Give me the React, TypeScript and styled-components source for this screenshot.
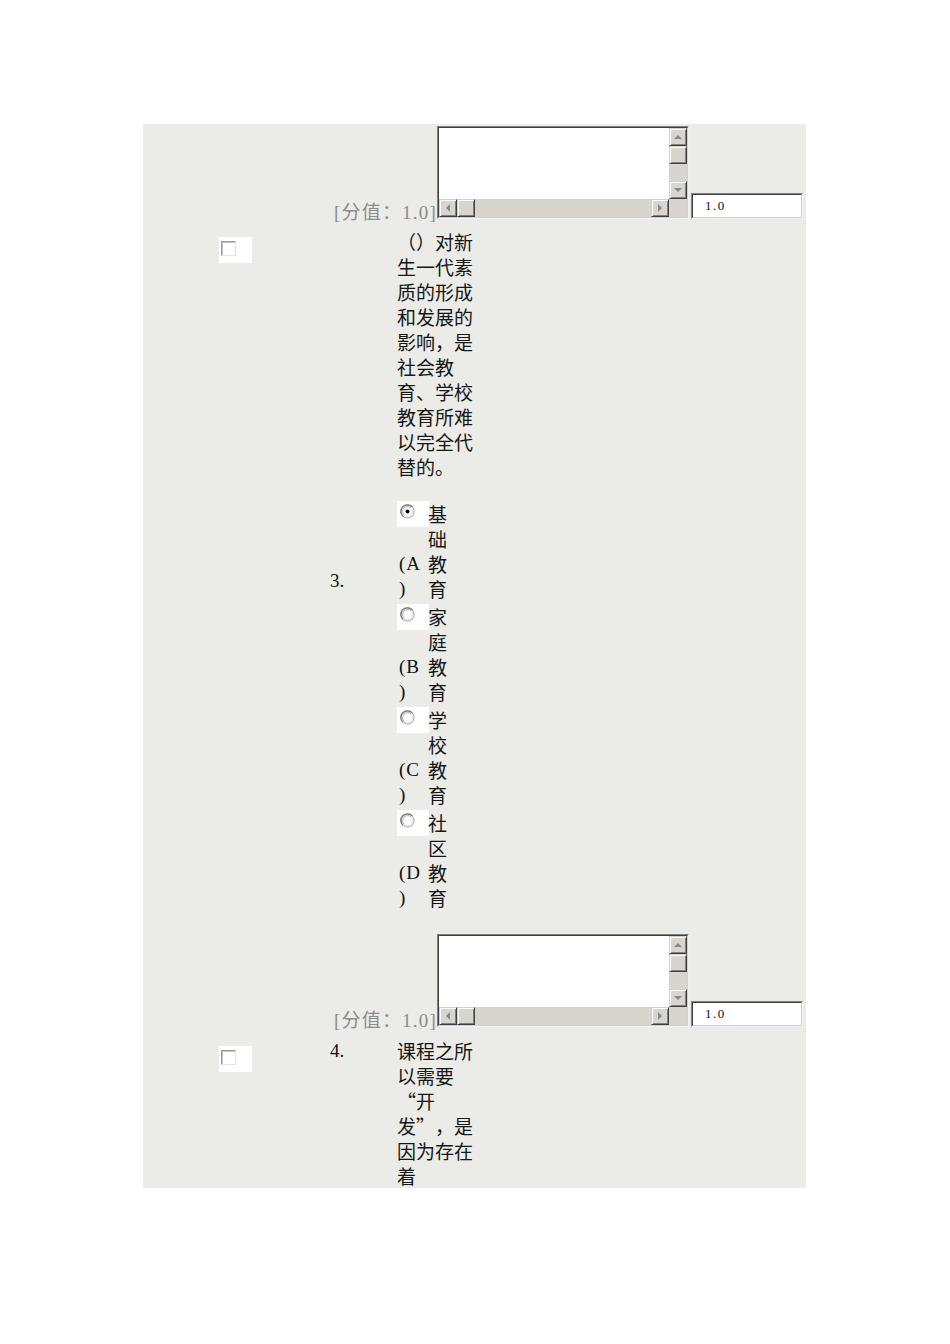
import React from "react";
import styled, { createGlobalStyle } from "styled-components";

type Option = { key: string; text: string; checked?: boolean };
type Question = { num: string; text: string; options?: Option[]; middle?: boolean };

const GlobalStyle = createGlobalStyle`
  html, body {
    margin: 0;
    padding: 0;
    background: #ffffff;
  }
  body {
    font-family: "Liberation Serif", "Noto Sans CJK SC", serif;
    color: #111;
  }
`;

const Page = styled.div`
  padding: 124px 0 0 143px;
`;

const Panel = styled.div`
  width: 663px;
  height: 1064px;
  overflow: hidden;
  background: #ebece8;
`;

// ---- score row: label + memo + value box
const ScoreRowWrap = styled.div`
  display: grid;
  grid-template-columns: 294px 252px 114px;
  align-items: end;
  padding-top: 2px;
`;

const ScoreLabel = styled.div`
  text-align: right;
  font-size: 19px;
  line-height: 19px;
  letter-spacing: 1.2px;
  color: #8b8b8b;
  margin-bottom: -3px;
  white-space: nowrap;
`;

const Sunken = styled.div<{ $w: number; $h: number; $ml?: number }>`
  box-sizing: border-box;
  width: ${(p) => p.$w}px;
  height: ${(p) => p.$h}px;
  margin-left: ${(p) => p.$ml ?? 0}px;
  border: 1px solid;
  border-color: #808080 #f4f4f4 #f4f4f4 #808080;
`;

const SunkenInner = styled.div`
  box-sizing: border-box;
  height: 100%;
  border: 1px solid;
  border-color: #404040 #d4d0c8 #d4d0c8 #404040;
  background: #ffffff;
`;

const MemoGrid = styled(SunkenInner)`
  display: grid;
  grid-template-columns: 1fr 18px;
  grid-template-rows: 1fr 18px;
`;

const VBar = styled.div`
  display: flex;
  flex-direction: column;
  background: #d8d5cf;
`;

const HBar = styled.div`
  display: flex;
  background: #d8d5cf;
`;

const Track = styled.div`
  flex: 1;
`;

const Corner = styled.div`
  background: #d8d5cf;
`;

const ScrollBtn = styled.div`
  box-sizing: border-box;
  width: 18px;
  height: 18px;
  flex: none;
  display: flex;
  align-items: center;
  justify-content: center;
  background: #d8d5cf;
  border: 1px solid;
  border-color: #d4d0c8 #404040 #404040 #d4d0c8;
  box-shadow: inset 1px 1px 0 #ffffff, inset -1px -1px 0 #808080;
`;

const Arrow = styled.span<{ $dir: "up" | "down" | "left" | "right" }>`
  width: 0;
  height: 0;
  ${(p) =>
    p.$dir === "up"
      ? "border-left: 4px solid transparent; border-right: 4px solid transparent; border-bottom: 4px solid #8a8a8a;"
      : p.$dir === "down"
      ? "border-left: 4px solid transparent; border-right: 4px solid transparent; border-top: 4px solid #8a8a8a;"
      : p.$dir === "left"
      ? "border-top: 4px solid transparent; border-bottom: 4px solid transparent; border-right: 4px solid #8a8a8a;"
      : "border-top: 4px solid transparent; border-bottom: 4px solid transparent; border-left: 4px solid #8a8a8a;"}
`;

const ValueBox = styled(SunkenInner)`
  display: flex;
  align-items: center;
  padding-left: 12px;
  font-family: "Liberation Serif", serif;
  font-size: 13px;
  letter-spacing: 1.5px;
  color: #111;
`;

// ---- question rows
const QuestionRowWrap = styled.div<{ $top: number }>`
  display: grid;
  grid-template-columns: 111px 67px 77px;
  padding-left: 76px;
  margin-top: ${(p) => p.$top}px;
`;

const CheckCell = styled.div`
  align-self: start;
  margin-top: 8px;
  box-sizing: border-box;
  width: 33px;
  height: 26px;
  padding: 4px 0 0 2px;
  background: #ffffff;
`;

const CheckBox = styled.span`
  display: block;
  box-sizing: border-box;
  width: 15px;
  height: 15px;
  border: 1px solid;
  border-color: #9a9a9a #e4e4e4 #e4e4e4 #9a9a9a;
  box-shadow: inset 1px 1px 0 #c4c4c4;
  background: #ffffff;
`;

const Number = styled.div<{ $middle?: boolean }>`
  align-self: ${(p) => (p.$middle ? "center" : "start")};
  font-size: 19px;
  line-height: 25px;
`;

const Content = styled.div`
  display: flex;
  flex-direction: column;
`;

const CjkText = styled.div`
  font-family: "Noto Sans CJK SC", sans-serif;
  font-size: 19px;
  line-height: 25px;
  color: #161616;
  text-spacing-trim: space-all;
  font-variant-east-asian: full-width;
  font-feature-settings: "chws" 0, "halt" 0;
`;

const QuestionText = styled(CjkText)`
  width: 77px;
`;

const Options = styled.div`
  display: flex;
  flex-direction: column;
  gap: 3px;
  margin: 22px 0;
`;

const OptionRow = styled.div`
  display: grid;
  grid-template-columns: 31px 19px;
  height: 100px;
`;

const OptionSide = styled.div`
  display: flex;
  flex-direction: column;
  justify-content: space-between;
`;

const RadioBox = styled.div`
  box-sizing: border-box;
  width: 32px;
  height: 26px;
  padding: 3px 0 0 3px;
  background: #ffffff;
`;

const OptionLabel = styled.div`
  width: 24px;
  padding-left: 2px;
  font-size: 19px;
  line-height: 25px;
  letter-spacing: 1px;
  word-break: break-all;
  line-break: anywhere;
`;

const OptionText = styled(CjkText)`
  width: 19px;
`;

const Radio: React.FC<{ checked?: boolean }> = ({ checked }) => (
  <svg width="15" height="15" viewBox="0 0 15 15">
    <circle cx="7.5" cy="7.5" r="6.6" fill="#fff" stroke="#b4b4b4" strokeWidth="1.2" />
    <path d="M2.8 12.2 A6.6 6.6 0 0 1 12.2 2.8" fill="none" stroke="#7c7c7c" strokeWidth="1.3" />
    <path d="M3.9 11.1 A5.1 5.1 0 0 1 11.1 3.9" fill="none" stroke="#a8a8a8" strokeWidth="1" />
    <path d="M11.1 3.9 A5.1 5.1 0 0 1 3.9 11.1" fill="none" stroke="#e2e2e2" strokeWidth="1" />
    {checked && <circle cx="7.5" cy="7.5" r="2" fill="#000" />}
  </svg>
);

const ScoreRow: React.FC<{ score: string }> = ({ score }) => (
  <ScoreRowWrap>
    <ScoreLabel>[分值：{score}]</ScoreLabel>
    <Sunken $w={252} $h={93}>
      <MemoGrid>
        <div />
        <VBar>
          <ScrollBtn>
            <Arrow $dir="up" />
          </ScrollBtn>
          <ScrollBtn />
          <Track />
          <ScrollBtn>
            <Arrow $dir="down" />
          </ScrollBtn>
        </VBar>
        <HBar>
          <ScrollBtn>
            <Arrow $dir="left" />
          </ScrollBtn>
          <ScrollBtn />
          <Track />
          <ScrollBtn>
            <Arrow $dir="right" />
          </ScrollBtn>
        </HBar>
        <Corner />
      </MemoGrid>
    </Sunken>
    <Sunken $w={112} $h={26} $ml={2}>
      <ValueBox>{score}</ValueBox>
    </Sunken>
  </ScoreRowWrap>
);

const QuestionRow: React.FC<{ q: Question; top: number }> = ({ q, top }) => (
  <QuestionRowWrap $top={top}>
    <CheckCell>
      <CheckBox />
    </CheckCell>
    <Number $middle={q.middle}>{q.num}</Number>
    <Content>
      <QuestionText>{q.text}</QuestionText>
      {q.options && (
        <Options>
          {q.options.map((o) => (
            <OptionRow key={o.key}>
              <OptionSide>
                <RadioBox>
                  <Radio checked={o.checked} />
                </RadioBox>
                <OptionLabel>({o.key})</OptionLabel>
              </OptionSide>
              <OptionText>{o.text}</OptionText>
            </OptionRow>
          ))}
        </Options>
      )}
    </Content>
  </QuestionRowWrap>
);

const q3: Question = {
  num: "3.",
  middle: true,
  text: "（）对新生一代素质的形成和发展的影响，是社会教育、学校教育所难以完全代替的。",
  options: [
    { key: "A", text: "基础教育", checked: true },
    { key: "B", text: "家庭教育" },
    { key: "C", text: "学校教育" },
    { key: "D", text: "社区教育" },
  ],
};

// zero-width space lets the line break before the opening quote
const q4: Question = {
  num: "4.",
  text: "课程之所以需要\u200B“开发”，是因为存在着",
};

export default function App() {
  return (
    <>
      <GlobalStyle />
      <Page>
        <Panel>
          <ScoreRow score="1.0" />
          <QuestionRow q={q3} top={10} />
          <ScoreRow score="1.0" />
          <QuestionRow q={q4} top={11} />
        </Panel>
      </Page>
    </>
  );
}
